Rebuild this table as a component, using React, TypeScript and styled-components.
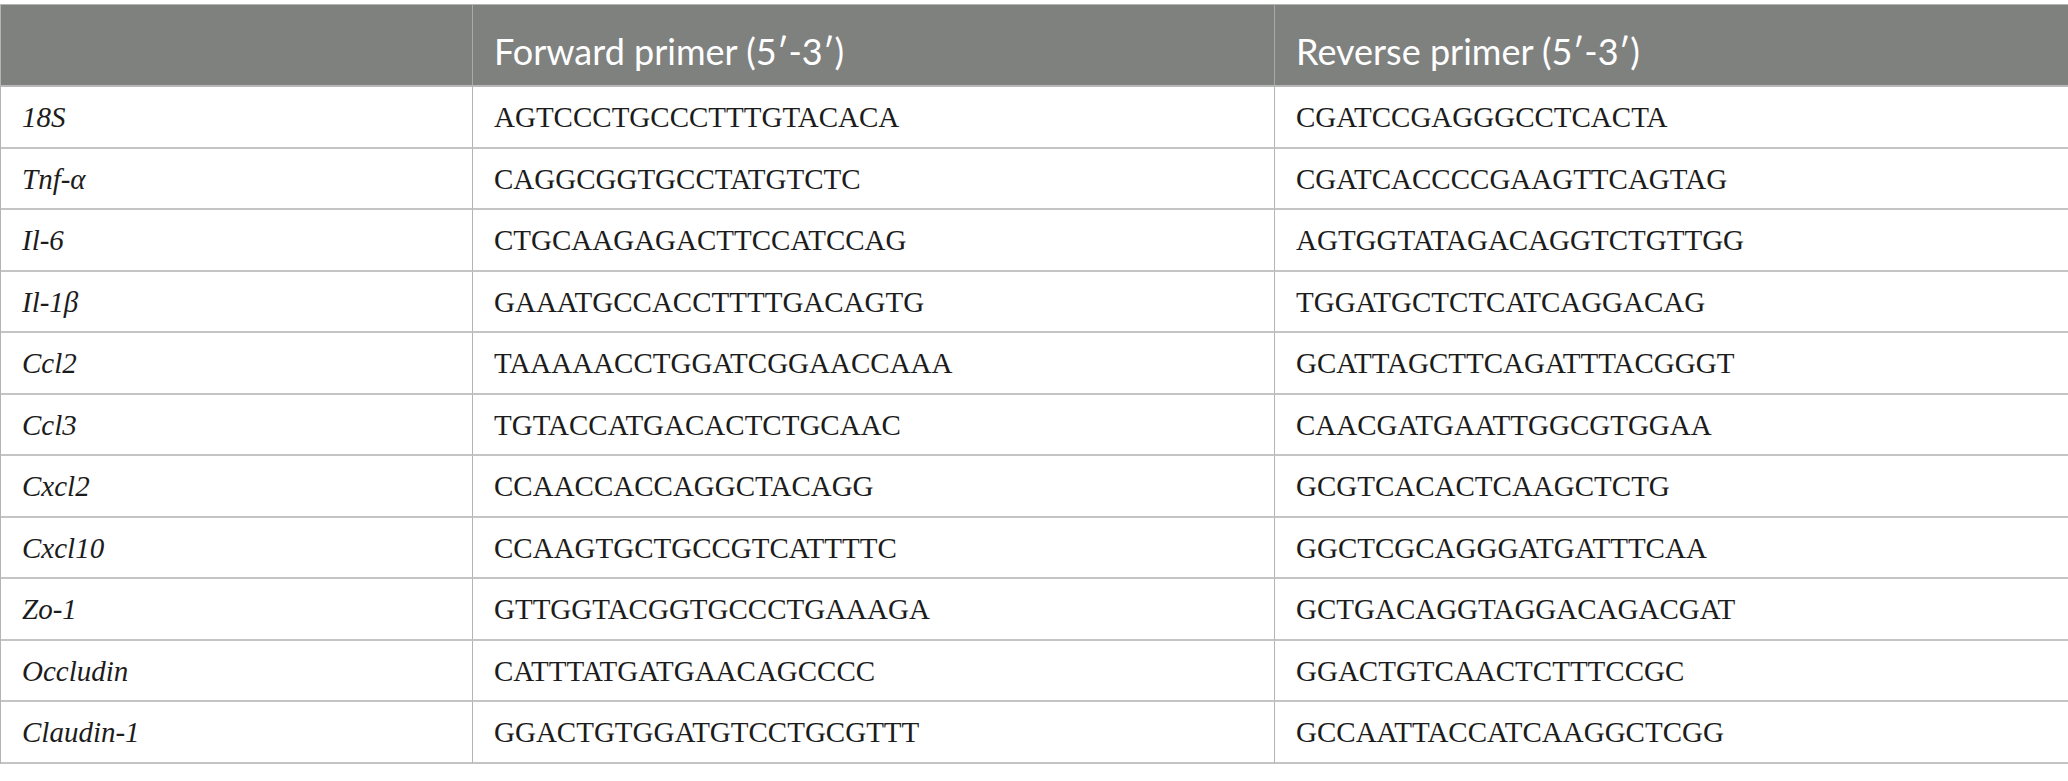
import React from "react";
import styled, { createGlobalStyle } from "styled-components";

const Global = createGlobalStyle`
  html, body { margin: 0; padding: 0; background: #ffffff; }
  body { width: 2068px; height: 781px; overflow: hidden; }
`;

const Page = styled.div`
  padding-top: 4px;
  width: 2068px;
`;

const Table = styled.div`
  display: grid;
  grid-template-columns: 472px 802px 794px;
  grid-template-rows: 82px repeat(11, 61.5px);
  border-top: 1px solid #b4b4b4;
  border-left: 1px solid #b4b4b4;
  box-sizing: border-box;
  width: 2068px;
`;

const HeadCell = styled.div`
  background: #7f817f;
  color: #ffffff;
  font-family: "Lato", "Open Sans", sans-serif;
  font-size: 36px;
  display: flex;
  align-items: center;
  padding: 12px 0 0 21px;
  box-sizing: border-box;
  border-right: 1px solid #a9aaa9;
  border-bottom: 2px solid #b8b8b8;
  white-space: nowrap;
`;

const Cell = styled.div<{ $gene?: boolean }>`
  display: flex;
  align-items: center;
  padding: 2px 0 0 21px;
  box-sizing: border-box;
  font-family: "Liberation Serif", "Times New Roman", serif;
  font-style: ${(p) => (p.$gene ? "italic" : "normal")};
  font-size: 29px;
  color: #1c1c1c;
  border-right: 1px solid #b4b4b4;
  border-bottom: 2px solid #c4c4c4;
  white-space: nowrap;
`;

const rows: [string, string, string][] = [
  ["18S", "AGTCCCTGCCCTTTGTACACA", "CGATCCGAGGGCCTCACTA"],
  ["Tnf-\u03b1", "CAGGCGGTGCCTATGTCTC", "CGATCACCCCGAAGTTCAGTAG"],
  ["Il-6", "CTGCAAGAGACTTCCATCCAG", "AGTGGTATAGACAGGTCTGTTGG"],
  ["Il-1\u03b2", "GAAATGCCACCTTTTGACAGTG", "TGGATGCTCTCATCAGGACAG"],
  ["Ccl2", "TAAAAACCTGGATCGGAACCAAA", "GCATTAGCTTCAGATTTACGGGT"],
  ["Ccl3", "TGTACCATGACACTCTGCAAC", "CAACGATGAATTGGCGTGGAA"],
  ["Cxcl2", "CCAACCACCAGGCTACAGG", "GCGTCACACTCAAGCTCTG"],
  ["Cxcl10", "CCAAGTGCTGCCGTCATTTTC", "GGCTCGCAGGGATGATTTCAA"],
  ["Zo-1", "GTTGGTACGGTGCCCTGAAAGA", "GCTGACAGGTAGGACAGACGAT"],
  ["Occludin", "CATTTATGATGAACAGCCCC", "GGACTGTCAACTCTTTCCGC"],
  ["Claudin-1", "GGACTGTGGATGTCCTGCGTTT", "GCCAATTACCATCAAGGCTCGG"],
];

export default function App() {
  return (
    <Page>
      <Global />
      <Table>
        <HeadCell />
        <HeadCell>Forward primer (5{"\u2032"}-3{"\u2032"})</HeadCell>
        <HeadCell>Reverse primer (5{"\u2032"}-3{"\u2032"})</HeadCell>
        {rows.map(([g, f, r]) => (
          <React.Fragment key={g}>
            <Cell $gene>{g}</Cell>
            <Cell>{f}</Cell>
            <Cell>{r}</Cell>
          </React.Fragment>
        ))}
      </Table>
    </Page>
  );
}
